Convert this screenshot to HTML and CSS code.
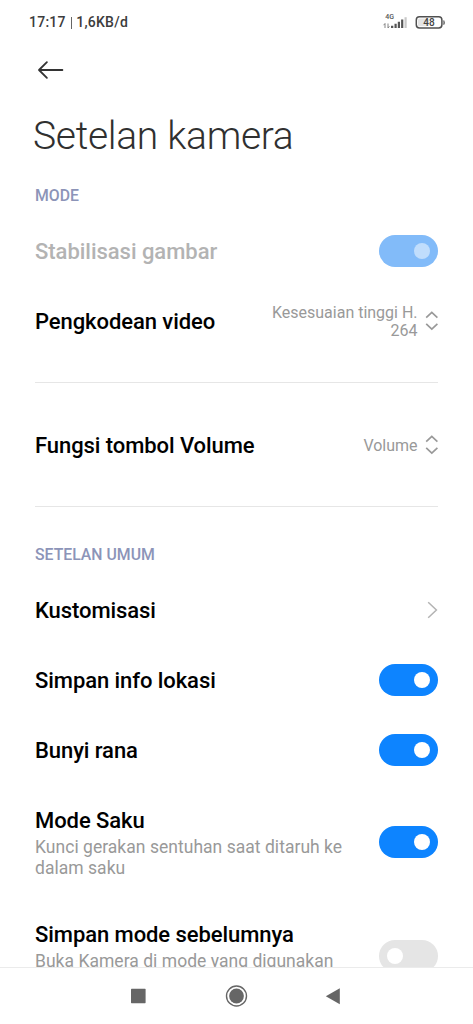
FILE: index.html
```html
<!DOCTYPE html>
<html lang="id">
<head>
<meta charset="utf-8">
<title>Setelan kamera</title>
<link rel="stylesheet" href="styles.css">
</head>
<body>
<div class="screen">
  <header class="status">
    <span class="clock">17:17 <i class="bar"></i> 1,6KB/d</span>
    <svg class="status-icons" width="64" height="18" viewBox="0 0 64 18">
      <text class="net" x="3.3" y="6.4">4G</text>
      <path d="M3 15v-4.5M1.6 12.2L3 10.5M6 10.5V15M6 15l1.4-1.7" fill="none" stroke="#777" stroke-width=".9"/>
      <path d="M9 15v-2.2h2.3V15zM12.5 15v-4.2h2.2V15zM15.8 15V8.8H18V15zM19.1 15V6.5h2.2V15z" fill="#555"/>
      <path d="M22.5 15V4.2h2.2V15z" fill="#c9c9c9"/>
      <rect x="34.3" y="3.8" width="25.6" height="11.2" rx="3.2" fill="#fff" stroke="#505050" stroke-width="1.5"/>
      <rect x="36" y="5.5" width="11" height="7.8" rx="1.5" fill="#e4e4e4"/>
      <path d="M61.8 7.5q1.3 2 0 4.2z" fill="#505050" stroke="#505050" stroke-width=".6"/>
      <text class="battery" x="47" y="12.9" text-anchor="middle">48</text>
    </svg>
  </header>
  <nav class="appbar">
    <svg width="28" height="20" viewBox="0 0 28 20"><path d="M26.4 10H3.4M10.9 2.2L3 10l7.9 7.8" fill="none" stroke="#333" stroke-width="1.8" stroke-linecap="round" stroke-linejoin="round"/></svg>
  </nav>
  <h1 class="title">Setelan kamera</h1>
  <main class="list">
    <h2 class="section first">MODE</h2>
    <div class="row disabled"><span class="label">Stabilisasi gambar</span><span class="switch on"><i></i></span></div>
    <div class="row"><span class="label">Pengkodean video</span><span class="value">Kesesuaian tinggi H.<br>264</span>
      <svg class="updown" width="13" height="20" viewBox="0 0 13 20"><path d="M1.2 6.6l5.6-5.2 5.6 5.2M1.2 12.8L6.8 18l5.6-5.2" fill="none" stroke="#999" stroke-width="1.7"/></svg></div>
    <hr class="divider">
    <div class="row"><span class="label">Fungsi tombol Volume</span><span class="value">Volume</span>
      <svg class="updown" width="13" height="20" viewBox="0 0 13 20"><path d="M1.2 6.6l5.6-5.2 5.6 5.2M1.2 12.8L6.8 18l5.6-5.2" fill="none" stroke="#999" stroke-width="1.7"/></svg></div>
    <hr class="divider">
    <h2 class="section">SETELAN UMUM</h2>
    <div class="row"><span class="label">Kustomisasi</span>
      <svg width="11" height="18" viewBox="0 0 11 18"><path d="M1.2 1.2L9.4 9l-8.2 7.8" fill="none" stroke="#b3b3b3" stroke-width="1.5"/></svg></div>
    <div class="row"><span class="label">Simpan info lokasi</span><span class="switch on"><i></i></span></div>
    <div class="row"><span class="label">Bunyi rana</span><span class="switch on"><i></i></span></div>
    <div class="row tall"><div class="text"><span class="label">Mode Saku</span><p class="desc">Kunci gerakan sentuhan saat ditaruh ke<br>dalam saku</p></div><span class="switch on"><i></i></span></div>
    <div class="row tall"><div class="text"><span class="label">Simpan mode sebelumnya</span><p class="desc">Buka Kamera di mode yang digunakan</p></div><span class="switch"><i></i></span></div>
  </main>
  <footer class="navbar">
    <svg width="473" height="56" viewBox="0 0 473 56" fill="#666">
      <rect x="131" y="20.8" width="14.6" height="14.4" rx=".6"/>
      <circle cx="236.5" cy="28" r="10" fill="none" stroke="#666" stroke-width="1.4"/>
      <circle cx="236.5" cy="28" r="7.4"/>
      <path d="M339.8 20.2v16L325.8 28.2z"/>
    </svg>
  </footer>
</div>
</body>
</html>
```
FILE: styles.css
```css
* { box-sizing: border-box; margin: 0; padding: 0; }
body { background: #fff; font-family: Roboto, "Noto Sans", sans-serif; }
.screen { width: 473px; height: 1024px; overflow: hidden; display: flex; flex-direction: column; background: #fff; }
.status { height: 44px; flex: none; display: flex; align-items: center; justify-content: space-between; padding: 0 27px 0 29px; }
.clock { font-size: 14px; font-weight: 500; color: #3c3c3c; letter-spacing: .25px; white-space: nowrap; }
.bar { display: inline-block; width: 1px; height: 12px; margin: 0 1px; background: #666; vertical-align: -2px; }
.status-icons { margin-bottom: 1px; }
.net { font-size: 7px; font-weight: 500; fill: #555; }
.battery { font-size: 10px; font-weight: 500; fill: #444; }
.appbar { height: 52px; flex: none; display: flex; align-items: center; padding-left: 36px; }
.title { height: 80px; flex: none; padding-left: 33px; line-height: 80px; font-size: 39px; letter-spacing: -.3px; font-weight: 300; color: #303030; white-space: nowrap; }
.list { flex: 1; min-height: 0; overflow: hidden; padding: 0 35px; }
.section { font-size: 15.8px; line-height: 20px; font-weight: 500; color: #8c94b8; margin: 38px 0 10px; }
.section.first { margin-top: 10px; }
.row { height: 70px; display: flex; align-items: center; }
.label { display: block; flex: 1; padding-top: 2px; font-size: 22px; letter-spacing: -.07px; line-height: 28px; font-weight: 500; color: #000; white-space: nowrap; }
.disabled .label { color: #b3b3b3; letter-spacing: -.03px; }
.value { padding-top: 2px; font-size: 16px; letter-spacing: -.01px; line-height: 18px; color: #999; text-align: right; white-space: nowrap; }
.updown { margin-left: 7.5px; }
.divider { border: 0; height: 1px; background: #e6e6e6; margin: 26px 0 27px; }
.switch { width: 59px; height: 32px; border-radius: 16px; background: #e5e5e5; display: flex; align-items: center; padding: 0 8px; flex: none; }
.switch i { width: 16px; height: 16px; border-radius: 50%; background: #fff; }
.switch.on { background: #0d84ff; justify-content: flex-end; }
.disabled .switch.on { background: #82bbf9; }
.disabled .switch i { background: #c0ddfc; }
.tall { height: 114px; }
.text { flex: 1; height: 72px; }
.tall .label { padding-top: 1px; }
.desc { padding-top: 2px; font-size: 17.5px; letter-spacing: .03px; line-height: 21px; color: #999; white-space: nowrap; }
.navbar { height: 57px; flex: none; border-top: 1px solid #ebebeb; background: #fff; }
.navbar svg { display: block; }
```
